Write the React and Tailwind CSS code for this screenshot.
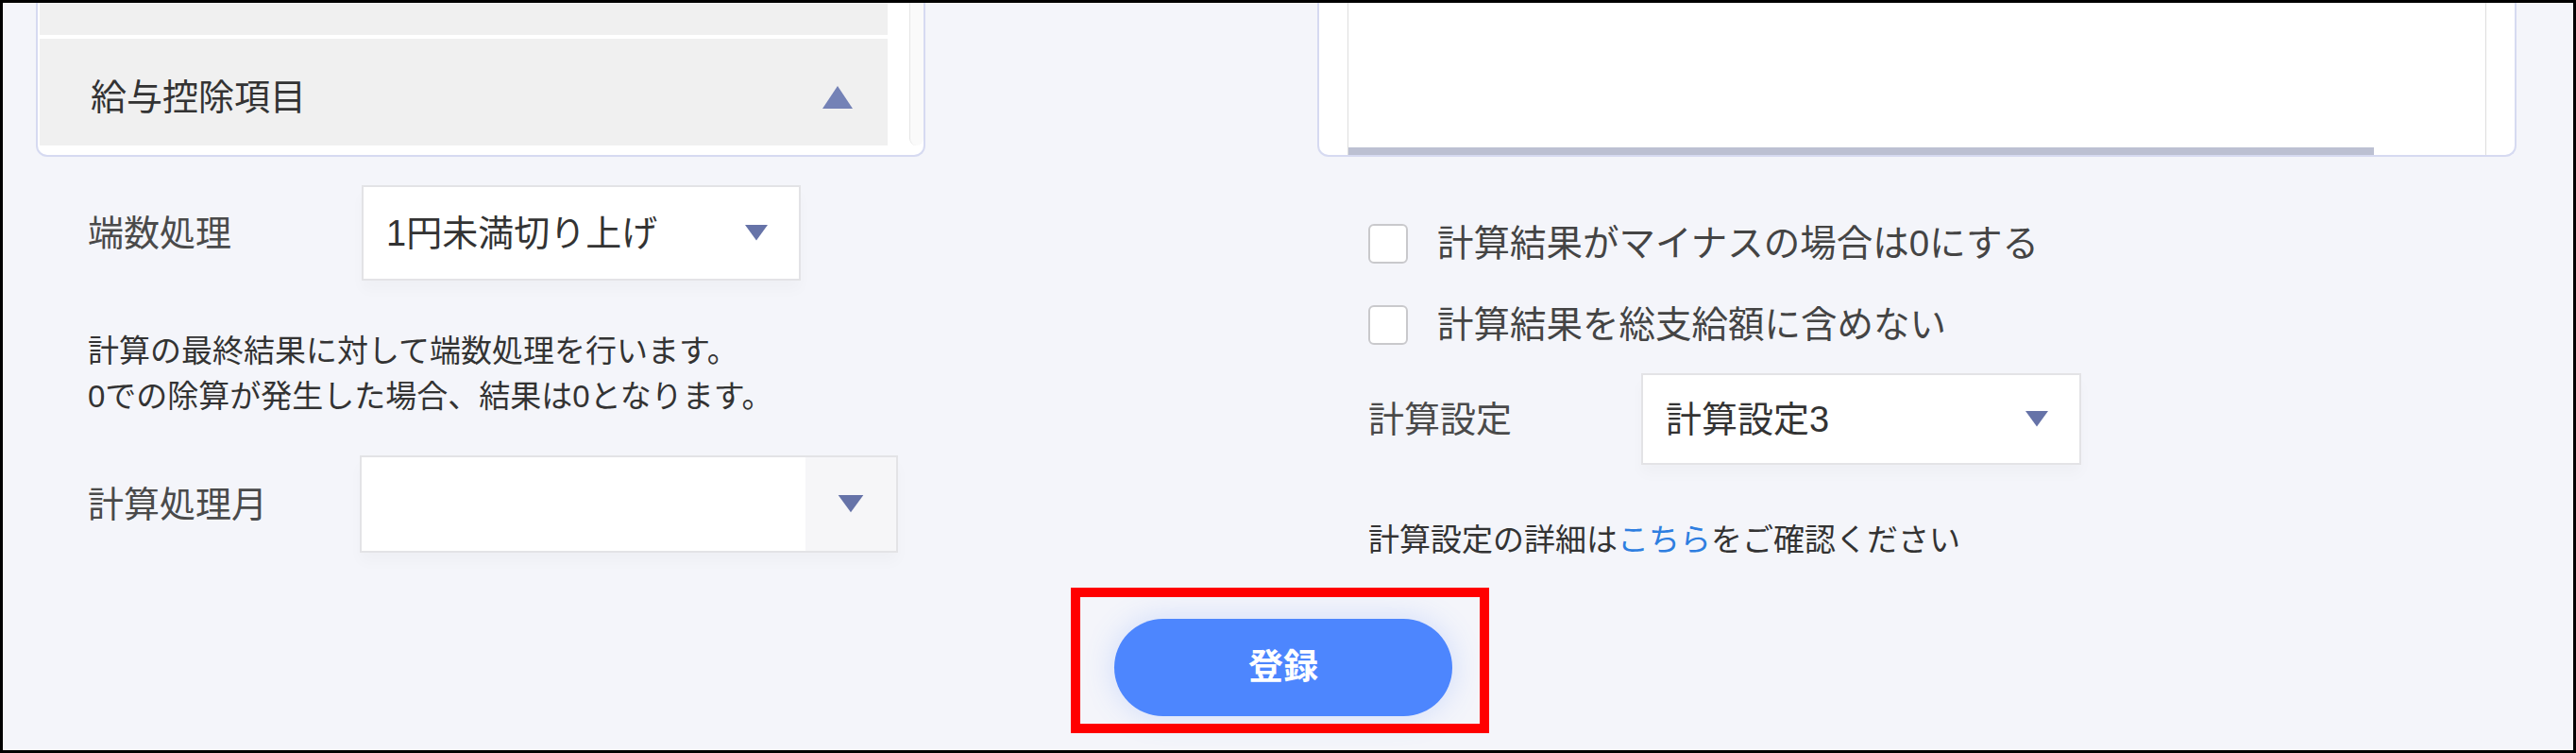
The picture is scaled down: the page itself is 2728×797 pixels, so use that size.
import React from "react";

const FONT = "font-['Liberation_Sans','Noto_Sans_CJK_JP',sans-serif]";

function Caret({ up = false, className = "" }) {
  return (
    <svg viewBox="0 0 32 24" className={className}>
      {up ? (
        <polygon points="16,0 32,24 0,24" fill="#7482b6" />
      ) : (
        <polygon points="0,0 32,0 16,22" fill="#6673a8" />
      )}
    </svg>
  );
}

function Select({ value, width, height, boxed = false }) {
  return (
    <div
      className={`flex items-stretch bg-white border-2 border-[#e3e3e6] shadow-[0_10px_14px_rgba(0,0,0,0.025)] ${width} ${height}`}
    >
      <div className="flex-1 flex items-center pl-[24px] text-[38px] leading-none text-[#333]">{value}</div>
      {boxed ? (
        <div className="w-[96px] bg-[#f6f6f8] flex items-center justify-center">
          <Caret className="w-[28px] h-[20px]" />
        </div>
      ) : (
        <div className="w-[90px] flex items-center justify-center">
          <Caret className="w-[26px] h-[18px]" />
        </div>
      )}
    </div>
  );
}

function Checkbox({ label }) {
  return (
    <div className="flex items-center gap-[31px] h-[42px]">
      <div className="w-[42px] h-[42px] rounded-[6px] border-2 border-[#c9c9cc] bg-white" />
      <span className="text-[38.5px] leading-none text-[#444]">{label}</span>
    </div>
  );
}

export default function App() {
  return (
    <div className={`relative w-[2728px] h-[797px] border-[3px] border-black bg-[#f4f5fa] overflow-hidden ${FONT}`}>
      <div className="flex flex-col">
        <div className="flex items-start">
          {/* Left column */}
          <div className="ml-[35px] w-[942px] flex flex-col">
            <div className="h-[163px] bg-white border-x-2 border-b-2 border-[#d6daf1] rounded-b-[12px] flex pb-[10px] pl-[2px]">
              <div className="flex-1 flex flex-col">
                <div className="h-[34px] bg-[#f0f0f0]" />
                <div className="h-[4px] bg-white" />
                <div className="flex-1 bg-[#f0f0f0] flex items-center justify-between pl-[54px] pr-[37px] pt-[10px]">
                  <span className="text-[38px] leading-none text-[#333]">給与控除項目</span>
                  <Caret up className="w-[32px] h-[24px]" />
                </div>
              </div>
              <div className="w-[23px] bg-white" />
              <div className="w-[15px] bg-[#fafafa] border-l border-[#e6e6e6] rounded-b-[8px]" />
            </div>

            <div className="pl-[55px] flex flex-col">
              <div className="mt-[30px] flex items-center">
                <span className="w-[290px] text-[38px] leading-none text-[#4a4a4a]">端数処理</span>
                <Select value="1円未満切り上げ" width="w-[465px]" height="h-[101px]" />
              </div>
              <div className="mt-[51px] text-[33px] leading-[48px] text-[#333]">
                <p>計算の最終結果に対して端数処理を行います。</p>
                <p>0での除算が発生した場合、結果は0となります。</p>
              </div>
              <div className="mt-[38px] flex items-center">
                <span className="w-[288px] text-[38px] leading-none text-[#4a4a4a]">計算処理月</span>
                <Select value="" width="w-[570px]" height="h-[103px]" boxed />
              </div>
            </div>
          </div>

          {/* Right column */}
          <div className="ml-[415px] w-[1270px] flex flex-col">
            <div className="h-[163px] bg-white border-x-2 border-b-2 border-[#d6daf1] rounded-b-[12px] flex px-[30px]">
              <div className="flex-1 flex flex-col justify-end border-x border-[#dedede]">
                <div className="w-[1086px] h-[8px] bg-[#bcc0d2]" />
              </div>
            </div>

            <div className="pl-[54px] flex flex-col">
              <div className="mt-[71px] flex flex-col gap-[44px]">
                <Checkbox label="計算結果がマイナスの場合は0にする" />
                <Checkbox label="計算結果を総支給額に含めない" />
              </div>
              <div className="mt-[30px] flex items-center">
                <span className="w-[289px] text-[38px] leading-none text-[#4a4a4a]">計算設定</span>
                <Select value="計算設定3" width="w-[466px]" height="h-[97px]" />
              </div>
              <p className="mt-[56px] text-[33px] leading-[48px] text-[#333]">
                計算設定の詳細は<span className="text-[#2e7ee0]">こちら</span>をご確認ください
              </p>
            </div>
          </div>
        </div>

        <div className="mt-[59px] flex justify-center pr-[10px]">
          <button className="w-[358px] h-[103px] rounded-full bg-[#4d86fe] text-white text-[37px] font-bold leading-none shadow-[0_0_32px_rgba(77,134,254,0.22)]">
            登録
          </button>
        </div>
      </div>

      {/* Annotation */}
      <div className="absolute left-[1131px] top-[619px] w-[443px] h-[154px] border-[10px] border-[#ff0000]" />
    </div>
  );
}
